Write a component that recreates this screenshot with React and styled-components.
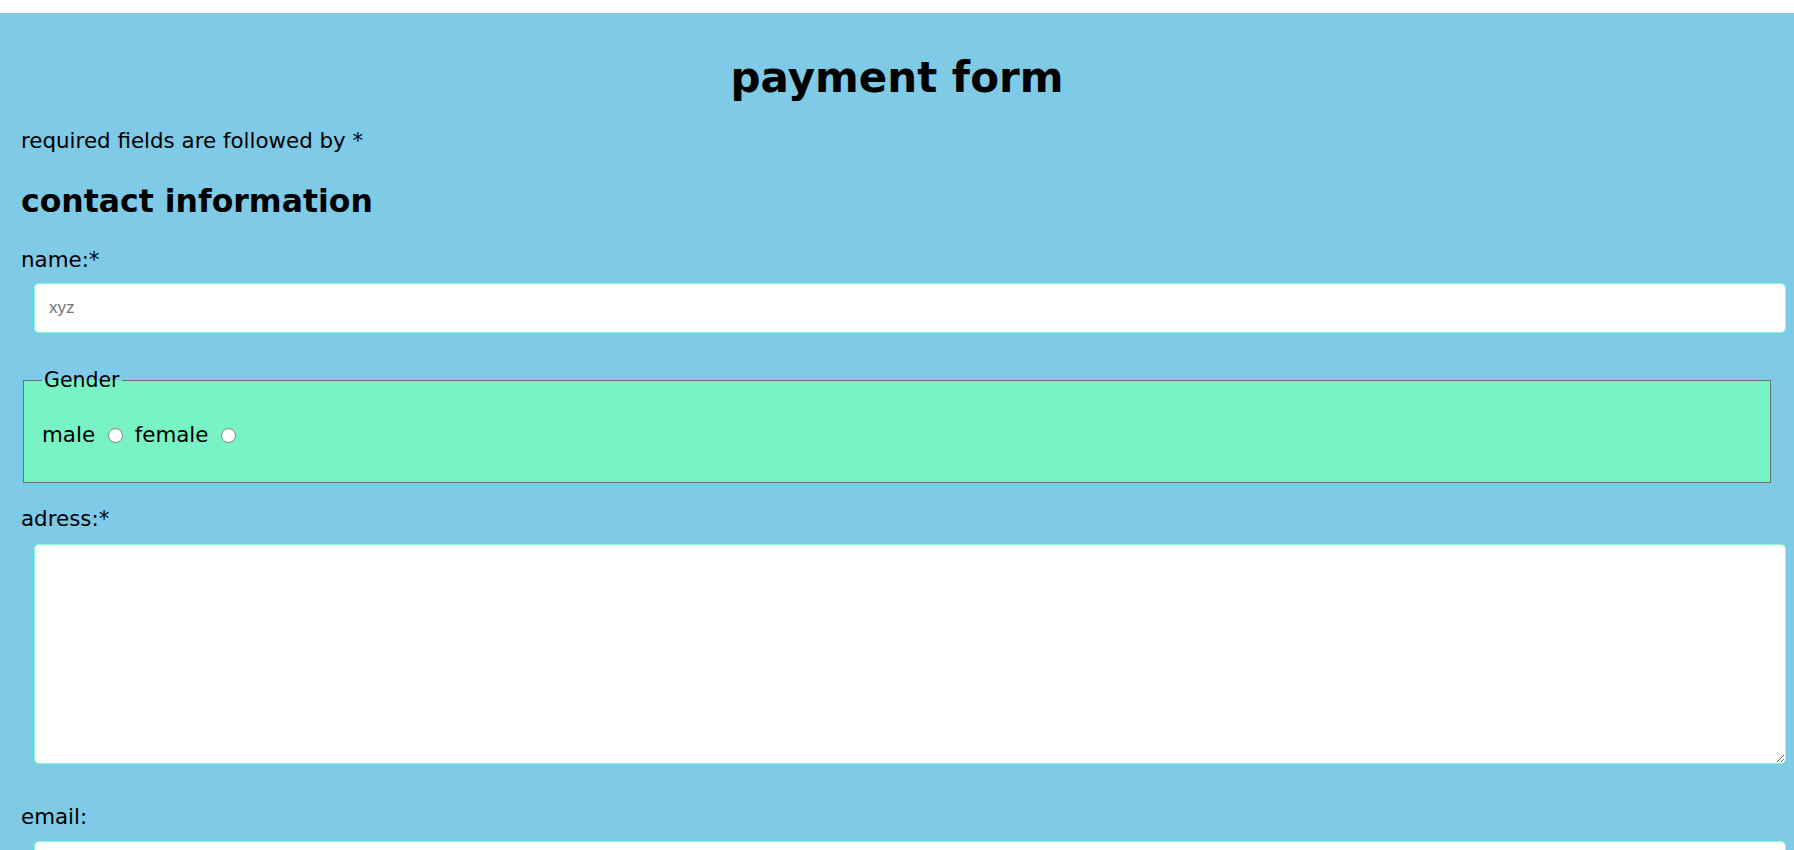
import React from 'react'
import styled, { createGlobalStyle } from 'styled-components'

const GlobalStyle = createGlobalStyle`
    body {
        margin: 0;
        background: #ffffff;
        font-family: "DejaVu Sans", Verdana, sans-serif;
        font-size: 21.4px;
        color: #000000;
    }
`

function App() {
    return (
        <Page>
            <GlobalStyle />
            <Form onSubmit={(e) => e.preventDefault()}>
                <Title>payment form</Title>
                <Note>required fields are followed by *</Note>
                <Section>contact information</Section>

                <Label htmlFor="name">name:*</Label>
                <TextInput id="name" type="text" placeholder="xyz" />

                <Gender>
                    <Legend>Gender</Legend>
                    <RadioRow>
                        <label htmlFor="male">male</label> <Radio id="male" name="gender" type="radio" />{' '}
                        <label htmlFor="female">female</label> <Radio id="female" name="gender" type="radio" />
                    </RadioRow>
                </Gender>

                <Label htmlFor="adress" $gap={13}>adress:*</Label>
                <Address id="adress" />

                <Label htmlFor="email" $top={40} $gap={12}>email:</Label>
                <TextInput id="email" type="email" />

                <Label htmlFor="phone" $top={40}>phone:</Label>
                <TextInput id="phone" type="tel" />
            </Form>
        </Page>
    )
}

const Page = styled.div`
    padding-top: 13px;
`

const Form = styled.form`
    background-color: #7ecae7;
    padding: 40px 21px 40px;
    display: flex;
    flex-direction: column;
    align-items: flex-start;
`

const Title = styled.h1`
    align-self: stretch;
    margin: 0 0 26px;
    text-align: center;
    font-size: 42px;
    font-weight: bold;
`

const Note = styled.p`
    margin: 0 0 30px;
`

const Section = styled.h2`
    margin: 0 0 28px;
    font-size: 31.5px;
    font-weight: bold;
`

const Label = styled.label`
    display: block;
    margin-top: ${({ $top }) => ($top || 0)}px;
    margin-bottom: ${({ $gap }) => ($gap || 11)}px;
`

const fieldBox = `
    box-sizing: border-box;
    width: 100%;
    margin-left: 13px;
    background: #ffffff;
    border: 1px solid #7fffd4;
    border-radius: 5px;
    font-family: "Liberation Sans", Arial, sans-serif;
    font-size: 17px;
`

const TextInput = styled.input`
    ${fieldBox}
    height: 50px;
    padding: 0 14px;

    &::placeholder {
        color: #757575;
    }
`

const Address = styled.textarea`
    ${fieldBox}
    display: block;
    height: 220px;
    padding: 10px 14px;
`

const Gender = styled.fieldset`
    box-sizing: border-box;
    align-self: stretch;
    margin: 35px 2px 23px;
    padding: 9px 18px 14px;
    background-color: #78f3c5;
    border: 1px solid #707070;
    min-width: 0;
`

const Legend = styled.legend`
    padding: 0 2px;
    font-size: 20.5px;
`

const RadioRow = styled.p`
    margin: 21px 0;
`

const Radio = styled.input`
    width: 15px;
    height: 15px;
    margin: 0 5px 0 6px;
    vertical-align: -1px;
`

export default App
